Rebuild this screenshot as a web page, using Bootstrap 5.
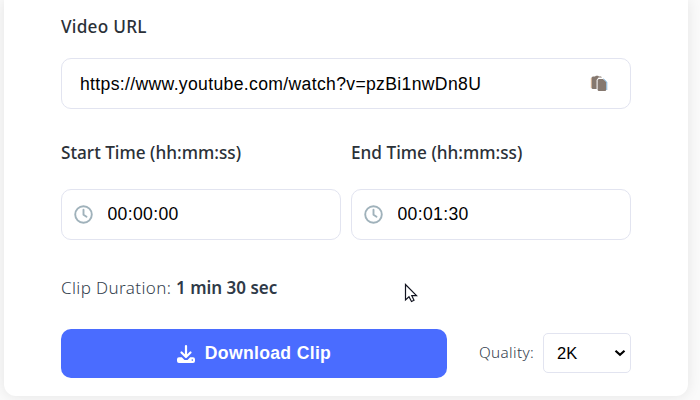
<!DOCTYPE html>
<html lang="en">
<head>
<meta charset="utf-8">
<title>Clip Downloader</title>
<link href="https://cdn.jsdelivr.net/npm/bootstrap@5.3.0/dist/css/bootstrap.min.css" rel="stylesheet">
<style>
body{background:#fafafa;height:400px;font-family:"Noto Sans","Open Sans",sans-serif;color:#333b48}
.clip-card{width:684px;height:396px;margin-left:4px;padding:12px 57px 0;background:#fff;border-radius:0 0 12px 12px;box-shadow:0 0 14px rgba(0,0,0,.09)}
.field-title{display:block;height:30px;line-height:30px;font-size:17.2px;font-weight:500;white-space:nowrap;color:#2b3138}
.field-title.url-title{letter-spacing:.25px}
.field-box{height:51px;border:1px solid #e2e4f0;border-radius:10px;background:#fff}
.field-box input{font:17.6px "Liberation Sans",Arial,sans-serif;color:#000;border:0;outline:0;background:none;padding:0;min-width:0;height:48px;letter-spacing:.33px}
.field-box.url-field input{letter-spacing:.335px;padding-top:1px}
.url-field{margin-top:16px;padding:0 22px 0 18px}
.times{margin-top:29px;gap:10px}
.time-field{margin-top:21px;padding-left:12px;gap:14.5px}
.duration{margin-top:33px;height:30px;line-height:30px;font-size:17px;font-weight:350;letter-spacing:.38px;color:#34414e;white-space:nowrap}
.duration strong{font-weight:600;letter-spacing:0;color:#2f3a48}
.actions{margin-top:26px;height:49px}
.download{width:386px;height:49px;background:#4a6cff;color:#fff;border:0;border-radius:10px;font:bold 17.6px "Liberation Sans",Arial,sans-serif;letter-spacing:.32px;gap:9px}
.download:hover{background:#4a6cff;color:#fff}
.download svg{margin-left:-1px}
.quality-name{font-size:15.3px;font-weight:350;letter-spacing:.35px;color:#34414e;width:64px;margin-left:32px;white-space:nowrap;margin-top:-2px}
.quality{width:88px;height:40px;border:1px solid #e2e4f0;border-radius:5px;background:#fff;font:16.500px "Liberation Sans",Arial,sans-serif;color:#000;padding:0 4px 0 13px;margin-top:-1px}
.pointer{left:404px;top:283px}
</style>
</head>
<body class="overflow-hidden position-relative">
<main class="clip-card">
  <label class="field-title url-title" for="url">Video URL</label>
  <div class="field-box url-field d-flex align-items-center">
    <input id="url" class="flex-grow-1" type="text" value="https://www.youtube.com/watch?v=pzBi1nwDn8U">
    <svg width="18" height="18" viewBox="0 0 18 18"><path d="M3 1.500h2L6 .8h2l1 .7h2l1 1H8.500L6.600 5v9H3Q1.500 14 1.500 12.500V3Q1.500 1.500 3 1.500Z" fill="#85786f"/><path d="M9 4h4l3.300 3v7.500q0 1.500-1.500 1.500H9Q7.600 16 7.600 14.500v-9Q7.600 4 9 4Z" fill="#85786f"/><path d="M13.500 3.800 16.800 7v8" fill="none" stroke="#69a9db" stroke-width=".8"/><path d="M1.300 3v10" stroke="#d9aa82" stroke-width=".7"/></svg>
  </div>
  <div class="times d-flex">
    <div class="flex-fill w-50">
      <label class="field-title" for="start">Start Time (hh:mm:ss)</label>
      <div class="field-box time-field d-flex align-items-center">
        <svg class="flex-shrink-0" width="19" height="19" viewBox="0 0 19 19" fill="none" stroke="#a0b2bb" stroke-width="1.900" stroke-linecap="round" stroke-linejoin="round"><circle cx="9.500" cy="9.500" r="8.300"/><path d="M9.500 4.800v4.900l3 2"/></svg>
        <input id="start" class="flex-grow-1" type="text" value="00:00:00">
      </div>
    </div>
    <div class="flex-fill w-50">
      <label class="field-title" for="end">End Time (hh:mm:ss)</label>
      <div class="field-box time-field d-flex align-items-center">
        <svg class="flex-shrink-0" width="19" height="19" viewBox="0 0 19 19" fill="none" stroke="#a0b2bb" stroke-width="1.900" stroke-linecap="round" stroke-linejoin="round"><circle cx="9.500" cy="9.500" r="8.300"/><path d="M9.500 4.800v4.900l3 2"/></svg>
        <input id="end" class="flex-grow-1" type="text" value="00:01:30">
      </div>
    </div>
  </div>
  <div class="duration">Clip Duration: <strong>1 min 30 sec</strong></div>
  <div class="actions d-flex align-items-center">
    <button class="btn download d-flex align-items-center justify-content-center" type="button">
      <svg width="20" height="20" viewBox="0 0 20 20"><path d="M10 2v10M5.500 8.500 10 13l4.500-4.500" fill="none" stroke="#fff" stroke-width="2.200" stroke-linecap="round" stroke-linejoin="round"/><path d="M3 13.300h2.800L8.500 16h3l2.700-2.700H17q2 0 2 2v1.700q0 2-2 2H3q-2 0-2-2v-1.700q0-2 2-2Z" fill="#fff"/><circle cx="16.300" cy="16.100" r=".8" fill="#4a6cff"/></svg>
      <span>Download Clip</span>
    </button>
    <span class="quality-name">Quality:</span>
    <div class="quality d-flex align-items-center justify-content-between"><span>2K</span>
      <svg width="12" height="8" viewBox="0 0 12 8"><path d="M1.500 1.700 6 5.700l4.500-4" fill="none" stroke="#000" stroke-width="2.200"/></svg>
    </div>
  </div>
</main>
<svg class="pointer position-absolute" width="15" height="21" viewBox="0 0 15 21"><path d="M1.500 1.500v15.500l3.500-3.200 2.500 4.700 2.500-1.300-2.200-4.500h4.700Z" fill="#fff" stroke="#11131f" stroke-width="1.200"/></svg>
<script src="https://cdn.jsdelivr.net/npm/bootstrap@5.3.0/dist/js/bootstrap.bundle.min.js"></script>
</body>
</html>
